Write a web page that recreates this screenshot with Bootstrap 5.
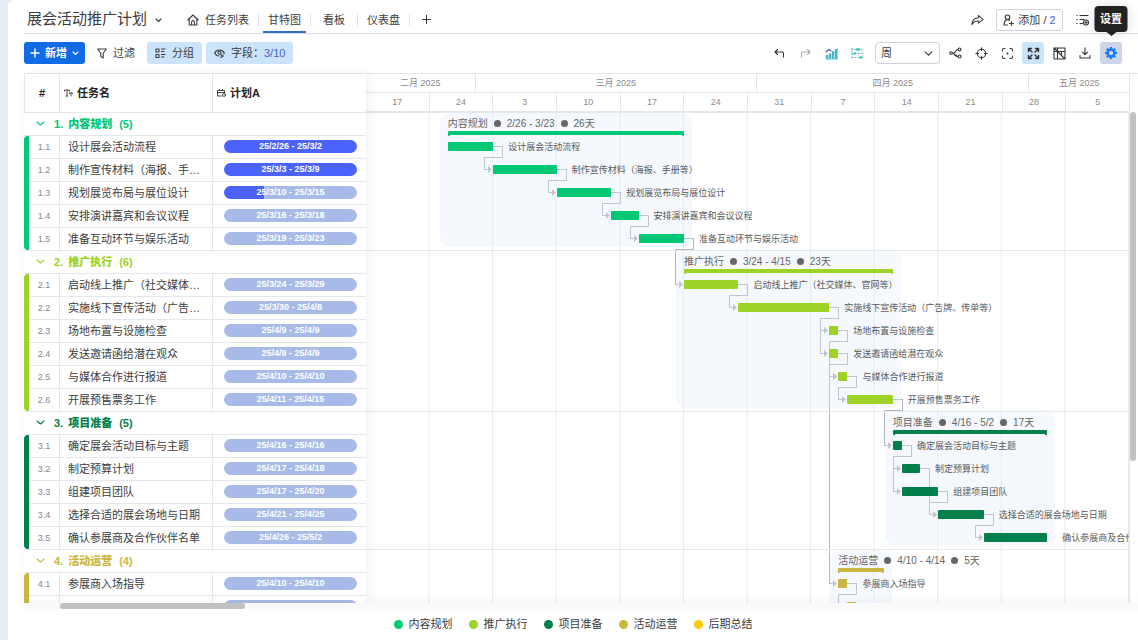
<!DOCTYPE html>
<html lang="zh-CN">
<head>
<meta charset="utf-8">
<meta name="viewport" content="width=device-width, initial-scale=1">
<title>展会活动推广计划</title>
<link href="https://cdn.jsdelivr.net/npm/bootstrap@5.3.0/dist/css/bootstrap.min.css" rel="stylesheet">
<style>
:root { --line: #e6e7eb; --row: 23px; --c1: #00c875; --c2: #9cd326; --c3: #037f4c; --c4: #cab641; --c5: #ffcb00; }
body { font-family: "Liberation Sans", "Noto Sans CJK SC", sans-serif; font-size: 11px; line-height: 16px; color: #3c3c3c; background: #e8edf7; overflow: hidden; }
svg { display: block; fill: none; stroke: currentColor; stroke-width: 1.1; stroke-linecap: round; stroke-linejoin: round; }
svg.thin { stroke-width: .8; }
svg.bold { stroke-width: 1.4; }
.app-panel { margin-left: 8px; background: #fff; border-top-left-radius: 6px; }
.app-head { height: 34px; margin-left: 16px; padding: 6px 21px 0 3px; border-bottom: 1px solid #dcdfe8; }
.app-title { font-size: 15px; line-height: 26px; font-weight: 400; margin: 0; }
.title-caret { margin: 10px 0 0 8px; }
.head-actions { padding-top: 3px; }
.view-tabs { margin-left: 16px; height: 27px; }
.view-tabs li { display: flex; align-items: center; height: 27px; position: relative; }
.view-tabs li + li::before { content: ""; width: 1px; height: 12px; background: #e1e3ea; }
.view-tabs a, .view-tabs button { display: flex; align-items: center; gap: 6px; height: 27px; margin: 0 4px; padding: 2px 5px 0; color: #3c3c3c; text-decoration: none; border: 0; border-bottom: 2px solid transparent; background: none; border-radius: 0; font-size: 11px; line-height: 16px; }
.view-tabs a.current { border-bottom-color: #2f6fc0; }
.view-tabs .wide { margin: 0 6px; padding: 2px 6px 0; }
.plain-btn { --bs-btn-font-size: 11px; --bs-btn-line-height: 16px; --bs-btn-padding-x: 7px; --bs-btn-padding-y: 2px; --bs-btn-border-radius: 3px; --bs-btn-color: #3c3c3c; display: inline-flex; align-items: center; gap: 6px; height: 22px; }
.btn-member { --bs-btn-border-color: #cfd1dc; width: 67px; padding: 0; justify-content: center; gap: 4px; white-space: nowrap; }
.blue-num { color: #3f62cf; }
.toolbar-row { height: 40px; margin-left: 16px; padding-right: 16px; }
.btn-new { --bs-btn-bg: #116be6; --bs-btn-color: #fff; --bs-btn-hover-bg: #0b5ccc; --bs-btn-hover-color: #fff; --bs-btn-padding-x: 5px; font-weight: 700; width: 61px; justify-content: space-between; gap: 0; }
.btn-soft { --bs-btn-bg: #cce4fb; }
.tool-btn { --bs-btn-font-size: 11px; --bs-btn-color: #333; --bs-btn-padding-x: 0; --bs-btn-padding-y: 0; --bs-btn-border-radius: 3px; --bs-btn-border-width: 0; width: 22px; height: 22px; display: inline-flex; align-items: center; justify-content: center; }
.tool-btn.on { --bs-btn-bg: #cce4fb; }
.tool-btn.dim { --bs-btn-color: #aaa; }
.tool-btn.gear { --bs-btn-bg: #cdd6e6; --bs-btn-color: #1677ff; position: relative; }
.scale-select { width: 65px; height: 22px; margin-left: 3px; padding: 0 20px 0 5px; font-size: 11px; line-height: 16px; border-color: #cfd1dc; border-radius: 4px; color: #3c3c3c; background-position: right 6px center; background-size: 9px 9px; }
.tip { position: absolute; bottom: 32px; left: 50%; transform: translateX(-50%); width: 33px; height: 26px; line-height: 26px; text-align: center; color: #fff; font-weight: 700; background: #222; border-radius: 4px; box-shadow: 0 0 14px rgba(0,0,0,.12); z-index: 5; }
.tip::after { content: ""; position: absolute; left: 12px; top: 26px; border: 5px solid transparent; border-top: 4px solid #222; border-bottom: 0; }
.plan { margin-left: 16px; border-top: 1px solid var(--line); min-height: 0; }
.task-pane { width: 342px; flex: none; position: relative; z-index: 2; background: #fff; box-shadow: 4px 0 8px rgba(90,110,160,.09); overflow: hidden; }
.task-table { width: 342px; table-layout: fixed; border-collapse: separate; border-spacing: 0; }
.task-table th, .task-table td { height: var(--row); padding: 0; border-bottom: 1px solid var(--line); white-space: nowrap; overflow: hidden; font-weight: 400; }
.task-table th + th, .task-table td + td { border-left: 1px solid var(--line); }
.task-table thead th { height: 39px; font-weight: 700; color: #222; }
.task-table thead th:first-child { border-left: 1px solid var(--line); }
.task-no { position: relative; text-align: center; font-size: 9px; color: #888; }
.task-table td.task-no { padding-left: 5px; overflow: visible; }
.task-no::before { content: ""; position: absolute; left: 0; top: 0; bottom: -1px; width: 5px; background: var(--c); }
.first .task-no::before { border-top-left-radius: 4px; }
.last .task-no::before { border-bottom-left-radius: 4px; bottom: 0; }
.task-table td.task-name { padding: 0 12px 0 8px; text-overflow: ellipsis; }
.group-title { display: flex; align-items: center; margin: 0; padding: 0 0 0 12px; border: 0; background: none; font-size: 11px; line-height: 16px; font-weight: 700; color: var(--c); }
.group-title svg { margin-right: 9px; }
.group-title b { margin: 0 7px 0 5px; }
.date-pill { display: block; width: 133px; height: 13px; margin: 0 0 0 11px; border-radius: 7px; text-align: center; font-size: 9px; line-height: 13px; font-weight: 700; color: #fff; background: linear-gradient(90deg, #4b63fb var(--p), #a8bbe8 var(--p)); }
.time-pane { min-width: 0; position: relative; border-right: 1px solid var(--line); overflow: hidden; font-size: 9px; color: #8c8c8c; }
.months { height: 19px; border-bottom: 1px solid var(--line); }
.months > div { flex: var(--n) 0 0; text-align: center; line-height: 18px; border-right: 1px solid var(--line); }
.months > div:last-child, .weeks > div:last-child { border-right: 0; }
.weeks { height: 20px; border-bottom: 2px solid var(--line); }
.weeks > div { flex: 1 0 0; text-align: center; line-height: 18px; border-right: 1px solid var(--line); }
.canvas { position: relative; background: linear-gradient(to left, #e9eaed 1px, transparent 1px) 0 0 / calc(100% / 12) 100%; }
.phase { position: relative; border-bottom: 1px solid var(--line); }
.phase-area { position: absolute; top: 0; bottom: 3px; left: calc(var(--s) / 84 * 100% - 8px); width: calc(var(--d) / 84 * 100% + 16px); background: rgba(222,234,253,.3); border-radius: 10px; }
.phase-head, .task-line { position: relative; height: var(--row); }
.phase:last-child { border-bottom: 0; }
.phase .task-line:last-child { height: 22px; }
.phase-info { position: absolute; left: calc(var(--s) / 84 * 100%); top: 3px; display: flex; align-items: center; gap: 6px; font-size: 10px; color: #666; white-space: nowrap; }
.phase-info i { width: 7px; height: 7px; border-radius: 50%; background: #666; }
.phase-span { position: absolute; left: calc(var(--s) / 84 * 100%); width: calc(var(--d) / 84 * 100%); top: 18px; height: 5px; border: 2px solid var(--c); border-top-width: 4px; border-bottom: 0; border-radius: 1px; }
.task-bar { position: absolute; z-index: 1; left: calc(var(--s) / 84 * 100%); width: calc(var(--d) / 84 * 100%); top: 6px; height: 9px; border-radius: 1px; background: var(--c); }
.task-label { position: absolute; z-index: 1; left: calc((var(--s) + var(--d)) / 84 * 100% + 15px); top: 3px; white-space: nowrap; color: #595959; }
.links { position: absolute; left: 0; top: 0; width: 100%; height: 100%; stroke: #b4b6bb; stroke-width: 1; stroke-linejoin: miter; shape-rendering: crispEdges; }
.links .tipmark { fill: #b4b6bb; stroke: none; shape-rendering: auto; }
.v-rail { width: 8px; flex: none; padding-top: 38px; }
.v-thumb { height: 71%; width: 6px; border-radius: 3px; background: #c1c1c1; }
.h-rail { height: 6px; margin-left: 16px; position: relative; z-index: 3; background: #fafafa; box-shadow: 0 -2px 10px rgba(0,0,0,.05); }
.h-thumb { width: 185px; height: 6px; margin-left: 36px; border-radius: 3px; background: #c1c1c1; }
.legend-row { height: 32px; gap: 16px; position: relative; z-index: 4; background: #fff; }
.legend-row span { display: flex; align-items: center; gap: 6px; }
.legend-row i { width: 9px; height: 9px; border-radius: 50%; background: var(--c); }
</style>
</head>
<body>
<div class="app-panel vh-100 d-flex flex-column">
  <header class="app-head d-flex align-items-start">
    <h1 class="app-title">展会活动推广计划</h1>
    <svg class="title-caret" width="7" height="9" viewBox="0 0 7 9"><path d="M1 3l2.500 2.500L6 3"/></svg>
    <nav aria-label="视图">
      <ul class="view-tabs list-unstyled d-flex mb-0">
        <li><a href="#list"><svg width="12" height="12" viewBox="0 0 12 12"><path d="M.8 6L6 1l5.200 5M2.200 5v6h7.600V5M4.600 11V8a1.400 1.400 0 0 1 2.800 0v3"/></svg>任务列表</a></li>
        <li><a href="#gantt" class="current" aria-current="page">甘特图</a></li>
        <li><a href="#board" class="wide">看板</a></li>
        <li><a href="#dash">仪表盘</a></li>
        <li><button type="button" class="wide" aria-label="添加视图"><svg width="9" height="9" viewBox="0 0 9 9"><path d="M4.500 .5v8M.5 4.500h8"/></svg></button></li>
      </ul>
    </nav>
    <div class="head-actions ms-auto d-flex align-items-center">
      <button type="button" class="btn tool-btn" aria-label="分享"><svg width="13" height="12" viewBox="0 0 14 13"><path d="M8 1.500l5 4.300-5 4.200V7.500C4.500 7.300 2.500 8.500 1 11.500 1.300 7 4 4.200 8 4z"/></svg></button>
      <button type="button" class="btn plain-btn btn-member ms-2"><svg width="11" height="12" viewBox="0 0 11 12"><circle cx="4.500" cy="3.300" r="2.300"/><path d="M3.500 5.800C1.500 7 1 8.500 1 11h3.500M5.500 5.800l1 .7M8.500 7.500v4M6.500 9.500h4"/></svg><span>添加 / <span class="blue-num">2</span></span></button>
      <button type="button" class="btn tool-btn ms-2 me-4" aria-label="列表选项"><svg width="13" height="12" viewBox="0 0 13 12"><path d="M4 1.500h8M4 5.500h4M4 9.500h2.500M.8 1.500h.4M.8 5.500h.4M.8 9.500h.4"/><circle cx="10" cy="8.500" r="2.500"/><path d="M10 7.500v2M9 8.500h2"/></svg></button>
    </div>
  </header>

  <div class="toolbar-row d-flex align-items-center gap-1">
    <button type="button" class="btn plain-btn btn-new"><svg class="bold" width="10" height="10" viewBox="0 0 10 10"><path d="M5 1v8M1 5h8"/></svg>新增<svg width="7" height="9" viewBox="0 0 7 9"><path d="M1 3l2.500 2.500L6 3"/></svg></button>
    <button type="button" class="btn plain-btn"><svg width="10" height="11" viewBox="0 0 10 11"><path d="M.7 1h8.600L6.200 5.300V10L3.800 8.500V5.300z"/></svg>过滤</button>
    <button type="button" class="btn plain-btn btn-soft"><svg width="11" height="10" viewBox="0 0 11 10"><path d="M1 1h3v3H1zM1 6.500h3v3H1zM6.500 1H10M6.500 3.500H9M6.500 6.500H10M6.500 9H9"/></svg>分组</button>
    <button type="button" class="btn plain-btn btn-soft"><svg width="11" height="10" viewBox="0 0 11 10"><path d="M5 8C3 8 1.500 6.500.7 5 2.500 1 8.500 1 10.300 5M7 9.500l1.500-1.500L7 6.500M8.500 8h1M10.300 5l-.5 1"/><circle cx="5.500" cy="4.800" r="1.500"/></svg><span>字段：<span class="blue-num">3/10</span></span></button>

    <button type="button" class="btn tool-btn ms-auto" aria-label="撤销"><svg width="11" height="11" viewBox="0 0 11 11"><path d="M3.500 1.500L1 4l2.500 2.500M1 4h7.500q1 0 1 1v4"/></svg></button>
    <button type="button" class="btn tool-btn dim" aria-label="重做"><svg width="11" height="11" viewBox="0 0 11 11"><path d="M7.500 1.500L10 4 7.500 6.500M10 4H2.500q-1 0-1 1v4"/></svg></button>
    <button type="button" class="btn tool-btn" aria-label="资源图"><svg width="13" height="13" viewBox="0 0 13 13"><path d="M2 12V8M5 12V6.500M8 12V4M11 12V2" stroke="#4fb3cc" stroke-width="2.400" stroke-linecap="butt"/><path d="M1 12.300h11.500V1.500" stroke="#5fe3cf" stroke-width=".8"/><path d="M1 5l3-2.500L6 4" stroke="#3858a8"/></svg></button>
    <button type="button" class="btn tool-btn" aria-label="进度图"><svg width="13" height="13" viewBox="0 0 13 13"><path d="M1 .8v11.400M.8 2.500h11.400M.8 6.500h11.400M.8 10.500h11.400" stroke="#4fa3c0" stroke-dasharray="1.500 1.500" stroke-linecap="butt"/><path d="M6 2.500h2M3.500 6.500h.5M9.500 10.500h1" stroke="#30cdb0" stroke-width="2.400"/><path d="M12 1v11" stroke="#bfe6ee" stroke-width=".8"/></svg></button>
    <select class="form-select scale-select" aria-label="时间刻度"><option>周</option><option>月</option></select>
    <button type="button" class="btn tool-btn" aria-label="依赖"><svg width="13" height="12" viewBox="0 0 13 12"><circle cx="2" cy="6" r="1.300"/><circle cx="10.500" cy="2.500" r="1.500"/><circle cx="10.500" cy="9.500" r="1.500"/><path d="M3.500 6H5M9 2.500C6.500 2.500 6.500 6 5 6S6.500 9.500 9 9.500"/></svg></button>
    <button type="button" class="btn tool-btn" aria-label="定位"><svg width="13" height="13" viewBox="0 0 13 13"><circle cx="6.500" cy="6.500" r="4.200"/><path d="M6.500 .8v2.700M6.500 9.500v2.700M.8 6.500h2.700M9.500 6.500h2.700"/></svg></button>
    <button type="button" class="btn tool-btn" aria-label="适应"><svg width="13" height="13" viewBox="0 0 13 13"><path d="M1.500 4V3q0-1.500 1.500-1.500h1M9 1.500h1q1.500 0 1.500 1.500v1M11.500 9v1q0 1.500-1.500 1.500H9M4 11.500H3q-1.500 0-1.500-1.500V9"/><circle cx="6.500" cy="6.500" r=".5"/></svg></button>
    <button type="button" class="btn tool-btn on" aria-label="全屏"><svg class="bold" width="13" height="13" viewBox="0 0 13 13"><path d="M1.500 4.500v-3h3M8.500 1.500h3v3M11.500 8.500v3h-3M4.500 11.500h-3v-3M2 2l3 3M11 2L8 5M11 11L8 8M2 11l3-3"/></svg></button>
    <button type="button" class="btn tool-btn" aria-label="隐藏网格"><svg width="13" height="13" viewBox="0 0 13 13"><path d="M1 1h11v11H1zM1 4.500h11M4.500 1v11M1 1l11 11M8.500 4.500V7"/></svg></button>
    <button type="button" class="btn tool-btn" aria-label="下载"><svg width="12" height="12" viewBox="0 0 12 12"><path d="M6 .8v6.700M3.500 5.200L6 7.700l2.500-2.500M1 8.500V11h10V8.500"/></svg></button>
    <button type="button" class="btn tool-btn gear" aria-label="设置"><svg width="14" height="14" viewBox="0 0 14 14"><circle cx="7" cy="7" r="3.500" stroke-width="2.600"/><path d="M7 1v1.500M7 11.500V13M1 7h1.500M11.500 7H13M2.800 2.800l1 1M10.200 10.200l1 1M11.200 2.800l-1 1M3.800 10.200l-1 1" stroke-width="2.200" stroke-linecap="butt"/></svg><span class="tip">设置</span></button>
  </div>

  <main class="plan d-flex flex-grow-1">
    <div class="task-pane">
      <table class="task-table">
        <colgroup><col style="width:35px"><col style="width:153px"><col></colgroup>
        <thead><tr>
          <th class="text-center">#</th>
          <th><span class="d-flex align-items-center gap-1 ps-1"><svg class="thin" width="9" height="8" viewBox="0 0 9 8"><path d="M.5 2V1h5v1M3 1v6M2.200 7h1.600M5.500 4.500V4h3v.5M7 4v3"/></svg>任务名</span></th>
          <th><span class="d-flex align-items-center gap-1 ps-1"><svg class="thin" width="9" height="8" viewBox="0 0 9 8"><path d="M4.500 7h-4V1.500h7V4M.5 3.500h7M2.500 .5v1M5.500 .5v1"/><circle cx="7" cy="6" r="1.500"/></svg>计划A</span></th>
        </tr></thead>
        <tbody id="taskRows"></tbody>
      </table>
    </div>
    <section class="time-pane flex-grow-1" aria-label="甘特图">
      <div class="months d-flex">
        <div style="--n:12">二月 2025</div><div style="--n:31">三月 2025</div><div style="--n:30">四月 2025</div><div style="--n:11">五月 2025</div>
      </div>
      <div class="weeks d-flex">
        <div>17</div><div>24</div><div>3</div><div>10</div><div>17</div><div>24</div><div>31</div><div>7</div><div>14</div><div>21</div><div>28</div><div>5</div>
      </div>
      <div class="canvas" id="canvas"></div>
    </section>
    <div class="v-rail"><div class="v-thumb"></div></div>
  </main>
  <div class="h-rail"><div class="h-thumb"></div></div>
  <footer class="legend-row d-flex justify-content-center align-items-center">
    <span><i style="--c:var(--c1)"></i>内容规划</span>
    <span><i style="--c:var(--c2)"></i>推广执行</span>
    <span><i style="--c:var(--c3)"></i>项目准备</span>
    <span><i style="--c:var(--c4)"></i>活动运营</span>
    <span><i style="--c:var(--c5)"></i>后期总结</span>
  </footer>
</div>

<script src="https://cdn.jsdelivr.net/npm/bootstrap@5.3.0/dist/js/bootstrap.bundle.min.js"></script>
<script>
// Each task: name, dates, start day (counted from 17 Feb), length in days, percent done
const phases = [
  { name: '内容规划', count: 5, span: '2/26 - 3/23', days: 26, s: 9, d: 26, tasks: [
    ['设计展会活动流程', '25/2/26 - 25/3/2', 9, 5, 100],
    ['制作宣传材料（海报、手册等）', '25/3/3 - 25/3/9', 14, 7, 100],
    ['规划展览布局与展位设计', '25/3/10 - 25/3/15', 21, 6, 30],
    ['安排演讲嘉宾和会议议程', '25/3/16 - 25/3/18', 27, 3, 0],
    ['准备互动环节与娱乐活动', '25/3/19 - 25/3/23', 30, 5, 0]] },
  { name: '推广执行', count: 6, span: '3/24 - 4/15', days: 23, s: 35, d: 23, tasks: [
    ['启动线上推广（社交媒体、官网等）', '25/3/24 - 25/3/29', 35, 6, 0],
    ['实施线下宣传活动（广告牌、传单等）', '25/3/30 - 25/4/8', 41, 10, 0],
    ['场地布置与设施检查', '25/4/9 - 25/4/9', 51, 1, 0],
    ['发送邀请函给潜在观众', '25/4/9 - 25/4/9', 51, 1, 0],
    ['与媒体合作进行报道', '25/4/10 - 25/4/10', 52, 1, 0],
    ['开展预售票务工作', '25/4/11 - 25/4/15', 53, 5, 0]] },
  { name: '项目准备', count: 5, span: '4/16 - 5/2', days: 17, s: 58, d: 17, tasks: [
    ['确定展会活动目标与主题', '25/4/16 - 25/4/16', 58, 1, 0],
    ['制定预算计划', '25/4/17 - 25/4/18', 59, 2, 0],
    ['组建项目团队', '25/4/17 - 25/4/20', 59, 4, 0],
    ['选择合适的展会场地与日期', '25/4/21 - 25/4/25', 63, 5, 0],
    ['确认参展商及合作伙伴名单', '25/4/26 - 25/5/2', 68, 7, 0]] },
  { name: '活动运营', count: 4, span: '4/10 - 4/14', days: 5, s: 52, d: 5, tasks: [
    ['参展商入场指导', '25/4/10 - 25/4/10', 52, 1, 0],
    ['', '', 53, 1, 0]] }
];
const deps = [['1.1','1.2'],['1.2','1.3'],['1.3','1.4'],['1.4','1.5'],['1.5','2.1'],['2.1','2.2'],['2.2','2.3'],['2.2','2.4'],['2.3','2.5'],['2.4','2.5'],['2.3','4.1'],['2.5','2.6'],['2.6','3.1'],['3.1','3.2'],['3.1','3.3'],['3.2','3.4'],['3.3','3.4'],['3.4','3.5'],['4.1','4.2']];
const ROW = 23, at = {};
let rows = '', chart = '', line = 0;
phases.forEach((p, i) => {
  const c = `--c:var(--c${i + 1})`;
  rows += `<tr><td colspan="3"><button type="button" class="group-title" style="${c}"><svg width="9" height="9" viewBox="0 0 9 9"><path d="M1 3l3.500 3L8 3"/></svg>${i + 1}.<b>${p.name}</b>(${p.count})</button></td></tr>`;
  chart += `<div class="phase" style="${c}"><div class="phase-area" style="--s:${p.s};--d:${p.d}"></div><div class="phase-head"><div class="phase-info" style="--s:${p.s}">${p.name}<i></i><span>${p.span}</span><i></i><span>${p.days}天</span></div><div class="phase-span" style="--s:${p.s};--d:${p.d}"></div></div>`;
  line++;
  p.tasks.forEach(([name, dates, s, d, done], k) => {
    const no = `${i + 1}.${k + 1}`, edge = k === 0 ? 'first' : k === p.count - 1 ? 'last' : '';
    rows += `<tr class="${edge}" style="${c}"><td class="task-no">${name && no}</td><td class="task-name">${name}</td><td><span class="date-pill" style="--p:${done}%">${dates}</span></td></tr>`;
    chart += `<div class="task-line"><div class="task-bar" style="--s:${s};--d:${d}"></div><div class="task-label" style="--s:${s};--d:${d}">${name}</div></div>`;
    at[no] = { s, e: s + d, y: line * ROW + 10 };
    line++;
  });
  chart += '</div>';
});
document.getElementById('taskRows').innerHTML = rows;
const canvas = document.getElementById('canvas');
canvas.innerHTML = chart;
canvas.insertAdjacentHTML('afterbegin', '<svg class="links" aria-hidden="true"></svg>');
// Dependency lines follow the width of the chart
function drawLinks() {
  const day = canvas.clientWidth / 84;
  canvas.querySelector('.links').innerHTML = deps.map(([a, b]) => {
    const f = at[a], t = at[b], x1 = Math.round(f.e * day), x2 = Math.round(t.s * day);
    return `<path d="M${x1} ${f.y + .5}H${x1 + 9.5}V${f.y + 11.5}H${x2 - 8.5}V${t.y + .5}H${x2 - 3}"/><path class="tipmark" d="M${x2 - 5} ${t.y - 3}l4 3.500-4 3.500z"/>`;
  }).join('');
}
drawLinks();
addEventListener('resize', drawLinks);
</script>
</body>
</html>
